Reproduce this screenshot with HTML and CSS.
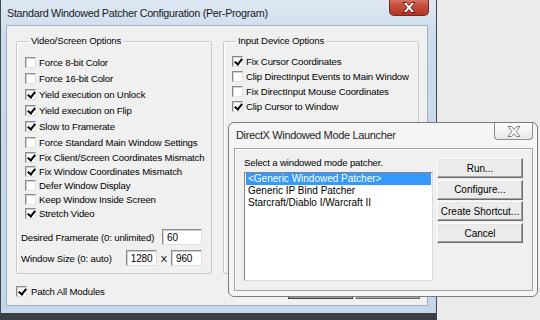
FILE: index.html
```html
<!DOCTYPE html>
<html lang="en">
  <head>
    <meta charset="UTF-8" />
    <title>Standard Windowed Patcher Configuration</title>
    <link rel="stylesheet" href="styles.css">
  </head>
  <body>
    <div class="win main-win">
      <div class="titlebar">
        <span class="title">Standard Windowed Patcher Configuration (Per-Program)</span>
        <span class="close-btn">
          <svg width="14" height="11" viewBox="0 0 14 11">
            <polygon points="1,0.5 4.5,0.5 7,3.5 9.5,0.5 13,0.5 9,5.5 13,10.5 9.5,10.5 7,7.5 4.5,10.5 1,10.5 5,5.5" fill="#fff" stroke="#5e211b" stroke-width="1" />
          </svg>
        </span>
      </div>
      <div class="client">
        <div class="groups">
          <fieldset class="group group-video">
            <legend>Video/Screen Options</legend>
            <div class="check"><span class="box"></span>Force 8-bit Color</div>
            <div class="check"><span class="box"></span>Force 16-bit Color</div>
            <div class="check"><span class="box on"></span>Yield execution on Unlock</div>
            <div class="check"><span class="box on"></span>Yield execution on Flip</div>
            <div class="check"><span class="box on"></span>Slow to Framerate</div>
            <div class="check"><span class="box"></span>Force Standard Main Window Settings</div>
            <div class="check"><span class="box on"></span>Fix Client/Screen Coordinates Mismatch</div>
            <div class="check"><span class="box on"></span>Fix Window Coordinates Mismatch</div>
            <div class="check"><span class="box"></span>Defer Window Display</div>
            <div class="check"><span class="box"></span>Keep Window Inside Screen</div>
            <div class="check"><span class="box on"></span>Stretch Video</div>
            <div class="field-row first">
              <span>Desired Framerate (0: unlimited)</span>
              <span class="edit wide">60</span>
            </div>
            <div class="field-row">
              <span>Window Size (0: auto)</span>
              <span class="size-edits">
                <span class="edit">1280</span>
                <span class="times">X</span>
                <span class="edit">960</span>
              </span>
            </div>
          </fieldset>
          <fieldset class="group group-input">
            <legend>Input Device Options</legend>
            <div class="check"><span class="box on"></span>Fix Cursor Coordinates</div>
            <div class="check"><span class="box"></span>Clip DirectInput Events to Main Window</div>
            <div class="check"><span class="box"></span>Fix DirectInput Mouse Coordinates</div>
            <div class="check"><span class="box on"></span>Clip Cursor to Window</div>
          </fieldset>
        </div>
        <div class="bottom-row">
          <div class="check patch"><span class="box on"></span>Patch All Modules</div>
          <div class="main-buttons">
            <button class="btn default">OK</button>
            <button class="btn">Cancel</button>
          </div>
        </div>
      </div>
    </div>

    <div class="win launcher">
      <div class="dlg-title">DirectX Windowed Mode Launcher</div>
      <span class="dlg-close">
        <svg width="14" height="11" viewBox="0 0 14 11">
          <polygon points="1,0.5 4.5,0.5 7,3.5 9.5,0.5 13,0.5 9,5.5 13,10.5 9.5,10.5 7,7.5 4.5,10.5 1,10.5 5,5.5" fill="#fff" stroke="#7d7d7d" stroke-width="1" />
        </svg>
      </span>
      <div class="dlg-client">
        <div class="pick">
          <div class="pick-label">Select a windowed mode patcher.</div>
          <ul class="listbox">
            <li class="selected">&lt;Generic Windowed Patcher&gt;</li>
            <li>Generic IP Bind Patcher</li>
            <li>Starcraft/Diablo I/Warcraft II</li>
          </ul>
        </div>
        <div class="dlg-buttons">
          <button class="btn">Run...</button>
          <button class="btn">Configure...</button>
          <button class="btn">Create Shortcut...</button>
          <button class="btn">Cancel</button>
        </div>
      </div>
    </div>
  </body>
</html>
```

FILE: styles.css
```css
* {
  box-sizing: border-box;
}
html,
body {
  margin: 0;
}
body {
  position: relative;
  width: 540px;
  height: 320px;
  overflow: hidden;
  background: #ebebeb;
  font-family: "Liberation Sans", Arial, sans-serif;
  font-size: 9.6px;
  letter-spacing: -0.15px;
  color: #000;
}

/* main config window */
.main-win {
  position: absolute;
  left: 0;
  top: -4px;
  width: 437px;
  height: 324px;
  display: flex;
  flex-direction: column;
  padding: 0 8px 7px 5px;
  background: linear-gradient(#e0eaf5, #cbdbec 40px, #c3d6ea);
  border: 1px solid #3e4852;
  border-bottom: 7px solid #3a3d42;
}
.titlebar {
  height: 28px;
  display: flex;
  align-items: center;
  padding: 4px 0 0 1px;
  font-size: 10.8px;
  letter-spacing: -0.3px;
  color: #1b1b1b;
}
.close-btn {
  position: absolute;
  top: -1px;
  right: 7px;
  width: 40px;
  height: 20px;
  display: flex;
  align-items: center;
  justify-content: center;
  padding-top: 3px;
  background: linear-gradient(#e08c80, #c75443 45%, #b9321f);
  border: 1px solid #6d2a22;
  border-top: none;
  border-radius: 0 0 5px 5px;
}
.client {
  flex: 1;
  display: flex;
  flex-direction: column;
  padding: 9px 7px 0 9px;
  background: #f0f0f0;
  border: 1px solid #9fb0c2;
}
.groups {
  display: flex;
  gap: 11px;
}
.group {
  width: 196px;
  min-width: 0;
  height: 239px;
  margin: 0;
  padding: 7px 9px 0 8px;
  border: 1px solid #c4cacf;
  border-radius: 2px;
  box-shadow: inset 1px 1px #fff;
}
.group legend {
  padding: 0 2px;
  margin-left: 4px;
  line-height: 12px;
}
.check {
  display: flex;
  align-items: center;
  gap: 3px;
  height: 15px;
  white-space: nowrap;
}
.group-video .check {
  height: 14px;
}
.group-video .check:nth-child(-n+7) {
  height: 16px;
}
.box {
  position: relative;
  flex: none;
  width: 11px;
  height: 11px;
  background: #fff;
  border: 1px solid;
  border-color: #8a8a8a #e2e2e2 #e2e2e2 #8a8a8a;
  box-shadow: inset 1px 1px #d0d0d0;
}
.box.on::after {
  content: "";
  position: absolute;
  left: 3px;
  top: 0;
  width: 3px;
  height: 6px;
  border: solid #000;
  border-width: 0 2px 2px 0;
  transform: rotate(38deg);
}
.field-row {
  display: flex;
  align-items: center;
  justify-content: space-between;
  height: 20px;
  margin: 1px 0 0 -4px;
}
.field-row.first {
  margin-top: 7px;
}
.size-edits {
  display: flex;
  align-items: center;
  gap: 3px;
}
.edit {
  width: 31px;
  height: 16px;
  padding: 2px 0 0 4px;
  font-size: 10px;
  background: #fff;
  border: 1px solid;
  border-color: #8b8b8b #dedede #dedede #8b8b8b;
  box-shadow: inset 1px 1px #cfcfcf;
}
.edit.wide {
  width: 40px;
}
.times {
  padding: 0 1px;
}
.bottom-row {
  flex: 1;
  display: flex;
  align-items: flex-end;
  justify-content: space-between;
}
.patch {
  margin-bottom: 6px;
  gap: 4px;
}
.main-buttons {
  display: flex;
  gap: 2px;
}
.btn {
  font: inherit;
  font-size: 10px;
  padding: 0;
  color: #000;
  background: #ebebeb;
  border: 1px solid;
  border-color: #fff #6b6b6b #6b6b6b #fff;
  box-shadow: inset -1px -1px #a2a2a2, inset 1px 1px #e4e4e4;
}
.main-buttons .btn {
  width: 65px;
  height: 23px;
  margin-bottom: 6px;
}
.main-buttons .btn.default {
  border-color: #3d3d3d;
}

/* launcher dialog */
.launcher {
  position: absolute;
  left: 228px;
  top: 122px;
  width: 310px;
  height: 175px;
  display: flex;
  flex-direction: column;
  padding: 0 4px 5px 5px;
  background: #f5f5f5;
  border: 1px solid #7c7c7c;
  border-radius: 6px;
}
.dlg-title {
  height: 25px;
  padding: 6px 0 0 2px;
  font-size: 11px;
  letter-spacing: -0.35px;
  color: #1e1e1e;
}
.dlg-close {
  position: absolute;
  top: 0;
  right: 4px;
  width: 39px;
  height: 17px;
  display: flex;
  align-items: center;
  justify-content: center;
  background: linear-gradient(#fdfdfd, #e9e9e9);
  border: 1px solid #8c8c8c;
  border-top: none;
  border-radius: 0 0 4px 4px;
}
.dlg-client {
  flex: 1;
  display: flex;
  gap: 4px;
  padding: 8px 0 0 9px;
  background: #f0f0f0;
  border: 1px solid #a3a3a3;
  box-shadow: inset 1px 1px #fff;
}
.pick {
  width: 189px;
}
.pick-label {
  line-height: 12px;
}
.listbox {
  height: 109px;
  margin: 3px 0 0;
  padding: 0 1px;
  list-style: none;
  background: #fff;
  border: 1px solid;
  border-color: #858585 #dcdcdc #dcdcdc #858585;
  font-size: 10px;
  letter-spacing: 0;
}
.listbox li {
  height: 12px;
  line-height: 12px;
  padding-left: 2px;
}
.listbox li.selected {
  background: #3399ff;
  color: #fff;
}
.dlg-buttons {
  display: flex;
  flex-direction: column;
  gap: 1.7px;
  padding-top: 1px;
}
.dlg-buttons .btn {
  width: 86px;
  height: 20px;
}
```
